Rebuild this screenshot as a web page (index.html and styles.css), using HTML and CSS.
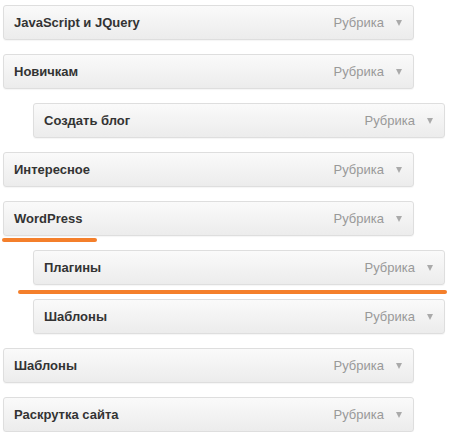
FILE: index.html
```html
<!DOCTYPE html>
<html lang="ru">
<head>
<meta charset="UTF-8" />
<title>Рубрики меню</title>
<link rel="stylesheet" href="styles.css">
</head>
<body>

<ul class="menu">
  <li class="item"><div class="bar"><span class="title">JavaScript и JQuery</span><span class="type">Рубрика</span><span class="arrow"></span></div></li>
  <li class="item"><div class="bar"><span class="title">Новичкам</span><span class="type">Рубрика</span><span class="arrow"></span></div></li>
  <li class="item sub"><div class="bar"><span class="title">Создать блог</span><span class="type">Рубрика</span><span class="arrow"></span></div></li>
  <li class="item"><div class="bar"><span class="title">Интересное</span><span class="type">Рубрика</span><span class="arrow"></span></div></li>
  <li class="item"><div class="bar"><span class="title">WordPress</span><span class="type">Рубрика</span><span class="arrow"></span></div><span class="mark mark-short"></span></li>
  <li class="item sub"><div class="bar"><span class="title">Плагины</span><span class="type">Рубрика</span><span class="arrow"></span></div><span class="mark mark-long"></span></li>
  <li class="item sub"><div class="bar"><span class="title">Шаблоны</span><span class="type">Рубрика</span><span class="arrow"></span></div></li>
  <li class="item"><div class="bar"><span class="title">Шаблоны</span><span class="type">Рубрика</span><span class="arrow"></span></div></li>
  <li class="item"><div class="bar"><span class="title">Раскрутка сайта</span><span class="type">Рубрика</span><span class="arrow"></span></div></li>
</ul>

</body>
</html>
```

FILE: styles.css
```css
body {
  margin: 0;
  background: #fff;
  font-family: "Liberation Sans", Arial, sans-serif;
}
.menu {
  list-style: none;
  margin: 0;
  padding: 5px 0 0 3px;
  display: flex;
  flex-direction: column;
  gap: 14px;
}
.item {
  position: relative;
  width: 411px;
}
.item.sub {
  margin-left: 30px;
  width: 412px;
}
.bar {
  display: flex;
  align-items: center;
  height: 33px;
  padding: 0 11px 0 10px;
  border: 1px solid #dedede;
  border-radius: 3px;
  background: linear-gradient(#fafafa, #ececec);
  box-shadow: 0 1px 1px rgba(0, 0, 0, 0.04);
}
.title {
  flex: 1;
  font-size: 13px;
  font-weight: bold;
  color: #333;
}
.type {
  font-size: 13px;
  color: #999;
}
/* small down triangle */
.arrow {
  margin: 1px 0 0 12px;
  width: 0;
  height: 0;
  border-left: 3.5px solid transparent;
  border-right: 3.5px solid transparent;
  border-top: 6px solid #aaa;
}
.mark {
  position: absolute;
  height: 4px;
  border-radius: 2px;
  background: #f47f2b;
}
.mark-short {
  left: -1px;
  top: 37px;
  width: 95px;
}
.mark-long {
  left: -15px;
  top: 40px;
  width: 429px;
}
```
